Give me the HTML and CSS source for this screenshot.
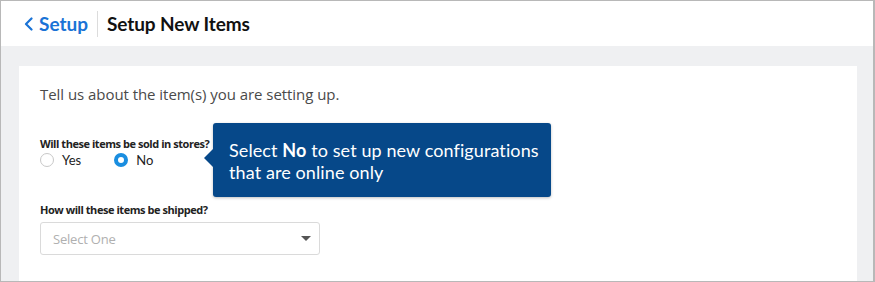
FILE: index.html
```html
<!DOCTYPE html>
<html lang="en">
<head>
    <meta charset="UTF-8">
    <meta name="viewport" content="width=device-width, initial-scale=1.0">
    <title>Setup New Items</title>
    <link rel="stylesheet" href="styles.css">
</head>
<body>
    <div class="frame">
        <header class="page-header">
            <a class="back-link" href="#">
                <svg class="back-icon" width="9" height="14" viewBox="0 0 9 14">
                    <path d="M7.5 1.5 L2 7 L7.5 12.5" fill="none" stroke="currentColor" stroke-width="2.2" stroke-linecap="round" stroke-linejoin="round"/>
                </svg>
                Setup
            </a>
            <span class="divider"></span>
            <h1 class="page-title">Setup New Items</h1>
        </header>

        <main class="content">
            <section class="card">
                <p class="intro">Tell us about the item(s) you are setting up.</p>

                <div class="field field-stores">
                    <div class="field-label">Will these items be sold in stores?</div>
                    <div class="radio-row">
                        <label class="radio">
                            <span class="radio-dot"></span>
                            Yes
                        </label>
                        <label class="radio checked">
                            <span class="radio-dot"></span>
                            No
                        </label>
                    </div>

                    <div class="tooltip">
                        Select <strong>No</strong> to set up new configurations<br>
                        that are online only
                    </div>
                </div>

                <div class="field field-ship">
                    <div class="field-label">How will these items be shipped?</div>
                    <div class="select">
                        <span class="select-placeholder">Select One</span>
                        <span class="select-caret"></span>
                    </div>
                </div>
            </section>
        </main>
    </div>
</body>
</html>
```

FILE: styles.css
```css
body {
    margin: 0;
    background: #fff;
    font-family: 'Open Sans', sans-serif;
    color: #222;
}

.frame {
    box-sizing: border-box;
    width: 875px;
    height: 282px;
    border: 1px solid #b8b8b8;
    border-right-width: 2px;
    display: flex;
    flex-direction: column;
    overflow: hidden;
}

.page-header {
    height: 45px;
    flex-shrink: 0;
    display: flex;
    align-items: center;
    padding-left: 23px;
    background: #fff;
}

.back-link {
    display: flex;
    align-items: center;
    gap: 6px;
    color: #1a73d6;
    text-decoration: none;
    font-family: 'Lato', sans-serif;
    font-weight: 700;
    font-size: 19px;
}

.back-icon {
    margin-top: 1px;
}

.divider {
    width: 1px;
    height: 26px;
    background: #dcdcdc;
    margin: 0 9px 0 9px;
}

.page-title {
    margin: 0;
    font-family: 'Lato', sans-serif;
    font-weight: 700;
    font-size: 19px;
    color: #111;
    letter-spacing: -0.1px;
}

.content {
    flex: 1;
    background: #eff0f2;
    padding: 20px 16px 0 18px;
    display: flex;
}

.card {
    flex: 1;
    background: #fff;
    padding: 18px 21px 0 21px;
}

.intro {
    margin: 0 0 33px 0;
    font-size: 15px;
    line-height: 20px;
    color: #4a4a4a;
    letter-spacing: -0.05px;
}

.field {
    position: relative;
}

.field-label {
    font-size: 11px;
    font-weight: 700;
    line-height: 14px;
    color: #222;
    letter-spacing: -0.45px;
}

.radio-row {
    display: flex;
    gap: 33px;
    margin-top: 1px;
}

.radio {
    display: flex;
    align-items: center;
    gap: 8px;
    font-family: 'Lato', sans-serif;
    font-size: 13px;
    color: #222;
    height: 16px;
}

.radio-dot {
    box-sizing: border-box;
    width: 14px;
    height: 14px;
    border-radius: 50%;
    border: 1px solid #c8c8c8;
    background: #fff;
}

.radio.checked .radio-dot {
    border: 4.5px solid #1a8ee0;
    background: #fff;
}

.tooltip {
    position: absolute;
    left: 173px;
    top: -14px;
    box-sizing: border-box;
    width: 338px;
    height: 74px;
    padding: 16px 0 0 16px;
    background: #064889;
    color: #fff;
    border-radius: 3px;
    box-shadow: 0 1px 3px rgba(0, 0, 0, 0.25);
    font-family: 'Lato', sans-serif;
    font-size: 18px;
    line-height: 22px;
    letter-spacing: 0.1px;
}

.tooltip strong {
    font-weight: 700;
}

.tooltip::before {
    content: '';
    position: absolute;
    left: -9px;
    top: 26px;
    border-top: 9px solid transparent;
    border-bottom: 9px solid transparent;
    border-right: 9px solid #064889;
}

.field-ship {
    margin-top: 35px;
}

.select {
    box-sizing: border-box;
    width: 280px;
    height: 33px;
    margin-top: 5px;
    border: 1px solid #dadada;
    border-radius: 3px;
    display: flex;
    align-items: center;
    justify-content: space-between;
    padding: 0 8px 0 12px;
}

.select-placeholder {
    font-size: 13px;
    color: #b0b0b0;
    letter-spacing: -0.2px;
}

.select-caret {
    width: 0;
    height: 0;
    border-left: 5px solid transparent;
    border-right: 5px solid transparent;
    border-top: 5px solid #555;
}
```
